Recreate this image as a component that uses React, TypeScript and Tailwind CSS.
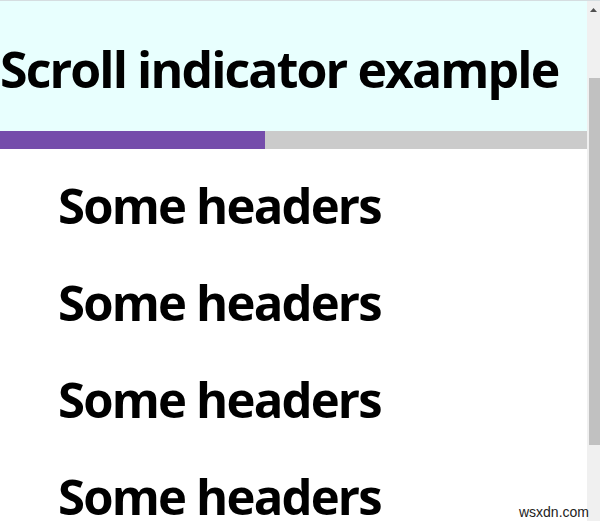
import React from 'react';

const headings = ['Some headers', 'Some headers', 'Some headers', 'Some headers'];

const ScrollIndicator: React.FC = () => {
  const progress = 265;

  return (
    <div className="relative flex h-[521px] w-[600px] overflow-hidden bg-white font-['Open_Sans',sans-serif] text-black">
      <div className="flex min-w-0 flex-1 flex-col border-t border-[#d5dde0]">
        <div className="h-[130px] shrink-0 bg-[#e8fffe] pt-[43px]">
          <h1 className="whitespace-nowrap text-[50px] font-bold leading-none tracking-[-1.9px]">
            Scroll indicator example
          </h1>
        </div>
        <div className="h-[18px] shrink-0 bg-[#cbcbcb]">
          <div className="h-full bg-[#754dab]" style={{ width: progress }} />
        </div>

        {/* Page content */}
        <div className="flex shrink-0 flex-col pl-[58px] pt-[8px]">
          {headings.map((text, i) => (
            <h2 key={i} className="whitespace-nowrap text-[49px] font-bold leading-[97px] tracking-[-1.8px]">
              {text}
            </h2>
          ))}
        </div>
      </div>

      {/* Scrollbar */}
      <div className="flex w-[13px] shrink-0 flex-col border-t border-[#d5dde0] bg-[#f0f0f0]">
        <div className="flex h-[17px] shrink-0 items-center justify-center">
          <svg width="7" height="4" viewBox="0 0 7 4">
            <path d="M0 4 L3.5 0 L7 4 Z" fill="#505050" />
          </svg>
        </div>
        <div className="mt-[60px] ml-[2px] h-[367px] shrink-0 bg-[#c1c1c1]" />
      </div>

      <span className="absolute bottom-[2px] right-[11px] font-['Liberation_Sans',sans-serif] text-[14px] leading-none text-[#222]">
        wsxdn.com
      </span>
    </div>
  );
};

export default function App() {
  return <ScrollIndicator />;
}
